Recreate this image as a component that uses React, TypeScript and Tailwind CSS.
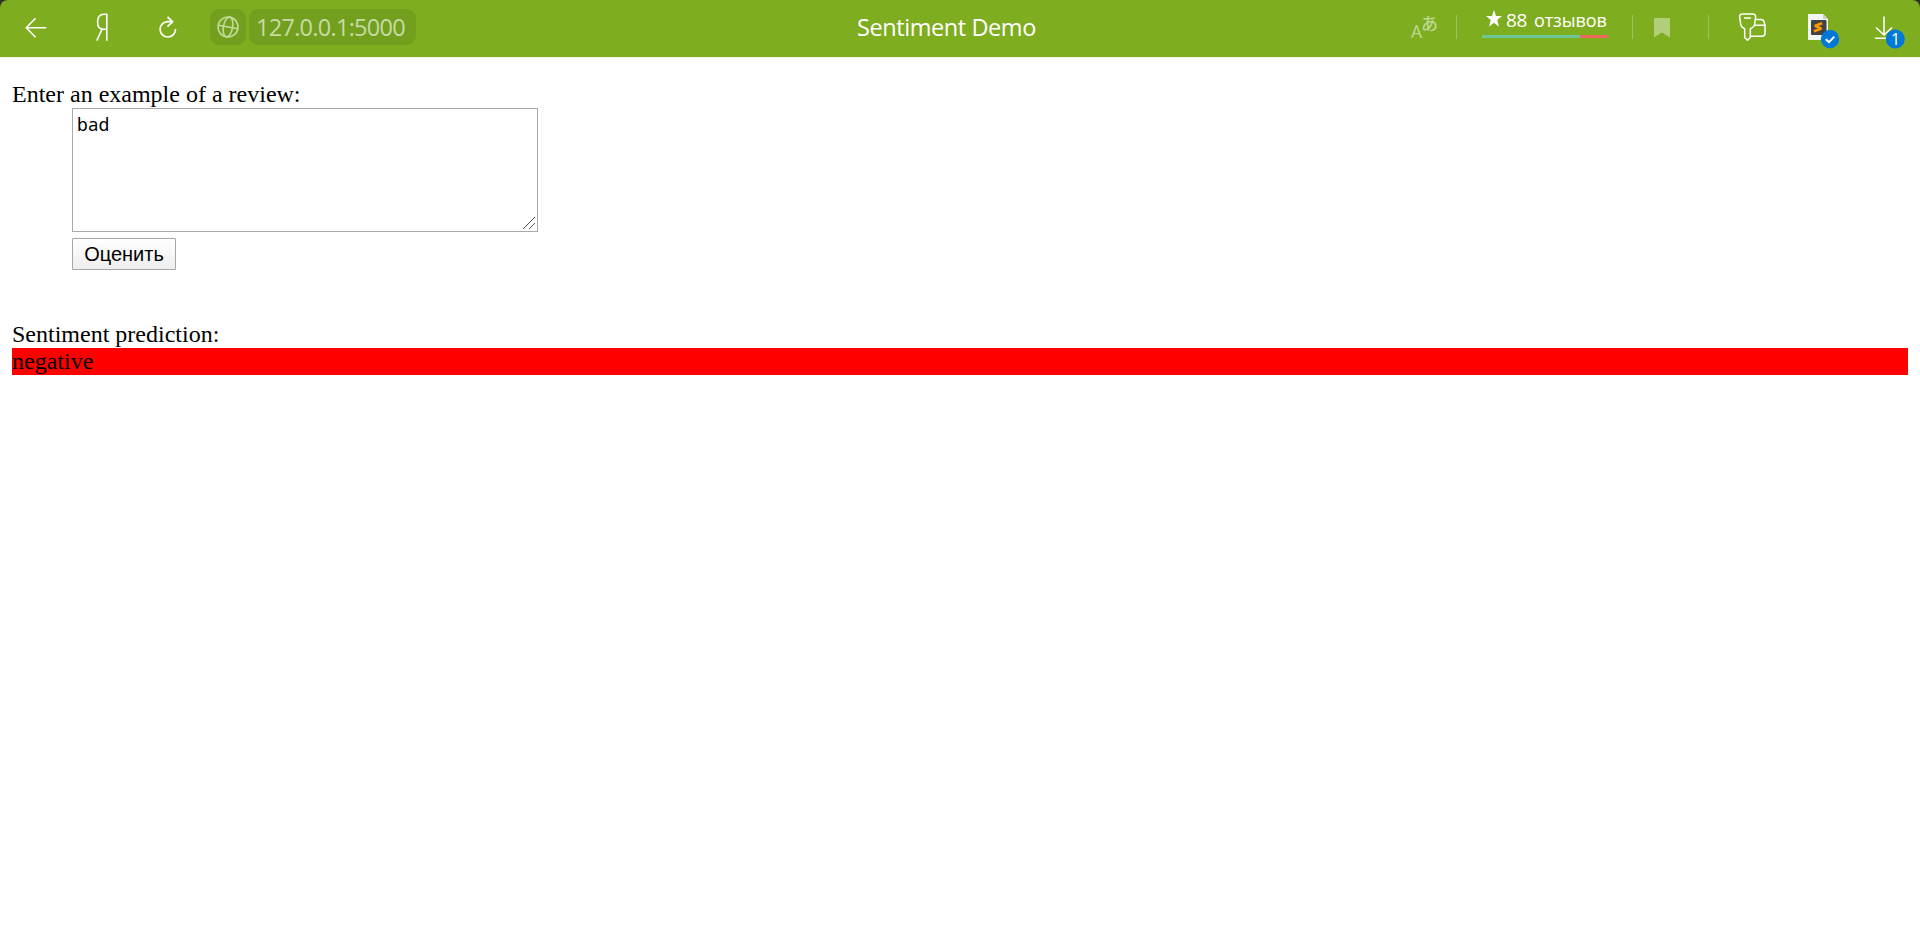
import React from "react";

const ui = "font-['Open_Sans','Noto_Sans',sans-serif]";

function Separator({ className }: { className: string }) {
  return <div className={`mt-[15px] h-6 w-px shrink-0 bg-[#9dc456] ${className}`} />;
}

function BackIcon() {
  return (
    <svg className="ml-[24px] h-[57px] w-6 shrink-0" viewBox="24 0 24 57" fill="none" stroke="#fff" strokeWidth="1.6">
      <path d="M46.3 27.7H26.5M35.5 18.2L26.3 27.7L35.5 37.2" />
    </svg>
  );
}

function HomeIcon() {
  return (
    <svg className="ml-[46px] h-[57px] w-4 shrink-0" viewBox="94 0 16 57" fill="none" stroke="#fff" strokeWidth="1.6">
      <path d="M106.8 40.7V14.2H104C99.5 14.2 97.6 17.5 97.6 22C97.6 26.6 99.7 29.3 103.3 29.3H106.8M102 29.3L96.8 40.7" />
    </svg>
  );
}

function ReloadIcon() {
  return (
    <svg className="ml-[48px] h-[57px] w-5 shrink-0" viewBox="158 0 20 57" fill="none" stroke="#fff" strokeWidth="1.7">
      <path d="M175.5 29A7.7 7.7 0 1 1 167.8 21.6H172.5M167.5 17L172.6 21.7L167.5 26.6" />
    </svg>
  );
}

function GlobeIcon() {
  return (
    <svg className="h-6 w-6" viewBox="0 0 24 24" fill="none" stroke="#c2dc98" strokeWidth="1.6">
      <g transform="rotate(10 12 12)">
        <circle cx="12" cy="12" r="10" />
        <ellipse cx="12" cy="12" rx="4.6" ry="10" />
        <path d="M2 12H22" />
      </g>
    </svg>
  );
}

function TranslateIcon() {
  return (
    <div className={`ml-auto flex h-[57px] w-[27px] shrink-0 ${ui} leading-none text-[#bcd990]`}>
      <span className="mt-[23px] w-[10px] text-[17.5px]">A</span>
      <span className="mt-[14px] font-['Noto_Sans_CJK_JP',sans-serif] text-[17px] font-medium">あ</span>
    </div>
  );
}

function Reviews() {
  return (
    <div className={`ml-[25px] w-[126px] shrink-0 ${ui} text-white`}>
      <div className="flex h-[35px] items-start pl-[4px]">
        <svg className="mt-[10px] h-[17px] w-[16px]" viewBox="0 0 16 17" fill="#fff">
          <path d="M8 0L10 6.1H16L11.2 10.1L13 16.7L8 12.8L3 16.7L4.8 10.1L0 6.1H6Z" />
        </svg>
        <span className="ml-[4px] mt-[8px] w-[21px] text-[19px] font-medium leading-6 tracking-[-0.3px]">88</span>
        <span className="ml-[7px] mt-[8px] text-[18px] font-medium leading-6 tracking-[-0.1px]">отзывов</span>
      </div>
      <div className="flex h-[3px]">
        <div className="w-[98px] bg-[#6cc499]" />
        <div className="w-[28px] bg-[#ef6a5c]" />
      </div>
    </div>
  );
}

function KeyIcon() {
  return (
    <svg className="ml-[28px] h-[57px] w-[30px] shrink-0" viewBox="1737 0 30 57" fill="none" stroke="#fff" strokeWidth="1.5" strokeLinejoin="round">
      <path d="M1742.5 13.9H1752.5Q1755.8 13.9 1755.6 17L1754.6 24.5Q1754.3 26.6 1752.3 27.6L1750.3 28.8V37.5L1747.5 40.3L1744.7 37.5V28.8L1743 27.6Q1741 26.6 1740.7 24.5L1739.7 17Q1739.4 13.9 1742.5 13.9ZM1744 18H1751" />
      <path d="M1755.5 19.5H1761Q1763.6 19.5 1764.2 22L1765 25.5V33.3Q1765 36.3 1762 36.3H1750.5M1754.6 25.2H1765" />
    </svg>
  );
}

function SublimeIcon() {
  return (
    <svg className="ml-[40px] h-[57px] w-[34px] shrink-0" viewBox="1807 0 34 57">
      <path d="M1808 14H1823L1828 19V40H1808Z" fill="#f4f4f2" />
      <path d="M1823 14L1828 19H1823Z" fill="#c9cdd0" />
      <rect x="1811" y="20" width="15.5" height="15" rx="1" fill="#434343" />
      <path d="M1822.2 23.2L1815 25.7L1821.3 28.6L1814 31.2" fill="none" stroke="#ff9800" strokeWidth="2.6" strokeLinejoin="bevel" />
      <circle cx="1830" cy="39" r="9.2" fill="#0078d7" />
      <path d="M1825.8 39.2L1829 42.2L1834.3 36.6" fill="none" stroke="#fff" strokeWidth="2" />
    </svg>
  );
}

function DownloadIcon() {
  return (
    <div className="relative ml-[33px] h-[57px] w-[33px] shrink-0">
      <svg className="h-[57px] w-[33px]" viewBox="1874 0 33 57" fill="none" stroke="#fff" strokeWidth="1.5">
        <path d="M1884 16.5V35M1876 27.5L1884 35L1892 27.5M1875 38.2H1890" />
        <circle cx="1895.3" cy="39" r="9.5" fill="#0078d7" stroke="none" />
      </svg>
      <span className={`absolute left-[12px] top-[29px] w-[19px] text-center ${ui} text-[16px] font-medium leading-5 text-white`}>1</span>
    </div>
  );
}

export default function App() {
  return (
    <div className="h-[946px] w-[1920px] overflow-hidden bg-white">
      <header className="bg-[#2d3325]">
        <div className="relative flex h-[57px] rounded-t-[8px] bg-[#7fad20]">
          <BackIcon />
          <HomeIcon />
          <ReloadIcon />
          <div className="ml-[32px] mt-[9px] flex h-9 gap-[3px]">
            <div className="flex w-9 items-center justify-center rounded-[9px] bg-[#739f1e]">
              <GlobeIcon />
            </div>
            <div className={`w-[167px] rounded-[9px] bg-[#739f1e] pl-[7px] ${ui} text-[23.5px] leading-9 tracking-[-0.72px] text-[#c7dba3]`}>
              127.0.0.1:5000
            </div>
          </div>
          <h1 className={`absolute left-[857px] top-0 whitespace-nowrap ${ui} text-[23.5px] leading-[55px] tracking-[-0.42px] text-white`}>
            Sentiment Demo
          </h1>
          <TranslateIcon />
          <Separator className="ml-[18px]" />
          <Reviews />
          <Separator className="ml-[24px]" />
          <svg className="ml-[21px] mt-[18px] h-5 w-4 shrink-0" viewBox="0 0 16 20" fill="#b2ce79">
            <path d="M0 1Q0 0 1 0H15Q16 0 16 1V19.5L8 14.5L0 19.5Z" />
          </svg>
          <Separator className="ml-[38px]" />
          <KeyIcon />
          <SublimeIcon />
          <DownloadIcon />
          <div className="w-[13px] shrink-0" />
        </div>
      </header>
      <main className="border-t border-[#f0f3e8] px-3 pt-[23px] font-['Liberation_Serif',serif] text-[24px] leading-[27px] text-black">
        <p>Enter an example of a review:</p>
        <form className="flex flex-col items-start pl-[60px]" onSubmit={(e) => e.preventDefault()}>
          <div className="relative">
            <textarea
              defaultValue="bad"
              spellCheck={false}
              className="block h-[124px] w-[466px] resize-none border border-[#a9a9a9] bg-white px-[4px] py-[3px] font-['Noto_Sans_Mono','DejaVu_Sans_Mono',monospace] text-[18px] leading-[25px] outline-none"
            />
            <svg className="absolute bottom-[3px] right-[3px] h-3 w-3" viewBox="0 0 12 12" fill="none" stroke="#555" strokeWidth="1">
              <path d="M0 12L12 0M6 12L12 6" />
            </svg>
          </div>
          <button className="mt-[6px] h-8 w-[104px] rounded-[1px] border border-[#a6a6a6] bg-linear-to-b from-white to-[#eeeeee] font-['Liberation_Sans',sans-serif] text-[20px] leading-[30px]">
            Оценить
          </button>
        </form>
        <section className="pt-[51px]">
          <p>Sentiment prediction:</p>
          <p className="bg-[#ff0000]">negative</p>
        </section>
      </main>
    </div>
  );
}
